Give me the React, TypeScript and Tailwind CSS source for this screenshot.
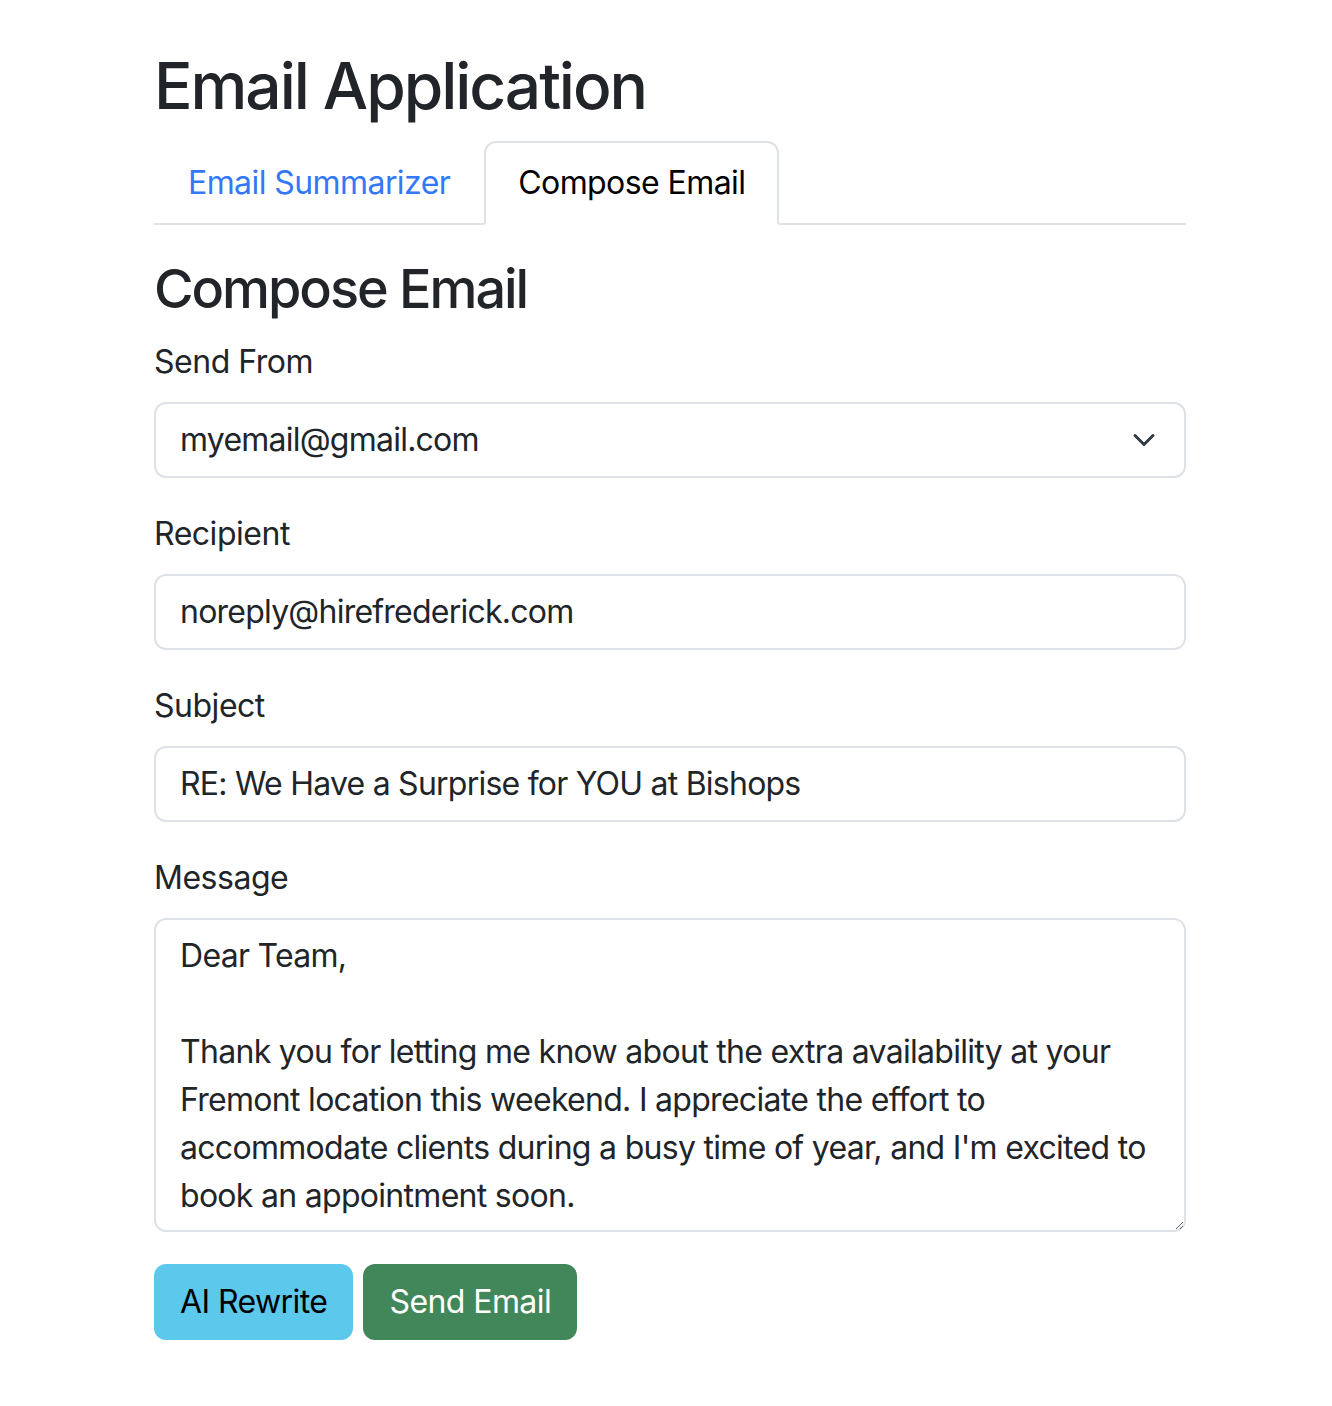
import { useState } from 'react';

const message = [
  'Dear Team,',
  '',
  'Thank you for letting me know about the extra availability at your',
  'Fremont location this weekend. I appreciate the effort to',
  "accommodate clients during a busy time of year, and I'm excited to",
  'book an appointment soon.'
].join('\n');

const fieldClass =
  'block h-[76px] w-full rounded-[12px] border-2 border-[#dee2e6] bg-white px-[24px] text-[32px] leading-[48px] tracking-[-0.024em] text-[#212529] outline-none';

const Field = ({ label, children }: { label: string; children: React.ReactNode }) => (
  <div className="mb-[32px]">
    <label className="mb-[16px] block text-[32px] leading-[48px] text-[#212529]">{label}</label>
    {children}
  </div>
);

const App = () => {
  const [tab, setTab] = useState('compose');
  const [from, setFrom] = useState('myemail@gmail.com');
  const [to, setTo] = useState('noreply@hirefrederick.com');
  const [subject, setSubject] = useState('RE: We Have a Surprise for YOU at Bishops');
  const [body, setBody] = useState(message);

  const tabs = [
    { id: 'summarize', label: 'Email Summarizer' },
    { id: 'compose', label: 'Compose Email' }
  ];

  return (
    <div className="min-h-[1406px] bg-white pl-[154px] pt-[48px] font-['Inter','Liberation_Sans',sans-serif] tracking-[-0.03em] text-[#212529]">
      <div className="w-[1032px]">
        <h1 className="mb-[16px] text-[64px] font-medium leading-[1.2] tracking-[-0.032em]">Email Application</h1>

        <ul className="flex border-b-2 border-[#dee2e6] tracking-[-0.036em]">
          {tabs.map((t) => (
            <li key={t.id} className="-mb-[2px]">
              <button
                onClick={() => setTab(t.id)}
                className={
                  tab === t.id
                    ? 'rounded-t-[12px] border-2 border-[#dee2e6] border-b-white bg-white px-[32px] py-[16px] text-[32px] leading-[48px] text-black'
                    : 'rounded-t-[12px] border-2 border-transparent px-[32px] py-[16px] text-[32px] leading-[48px] text-[#3478f6]'
                }
              >
                {t.label}
              </button>
            </li>
          ))}
        </ul>

        <div className="mt-[32px]">
          <h2 className="mb-[16px] text-[54px] font-medium leading-[1.2] tracking-[-0.038em]">Compose Email</h2>

          <Field label="Send From">
            <div className="relative">
              <select
                value={from}
                onChange={(e) => setFrom(e.target.value)}
                className={fieldClass + ' appearance-none pr-[72px]'}
              >
                <option>myemail@gmail.com</option>
                <option>work@gmail.com</option>
              </select>
              <svg
                className="pointer-events-none absolute right-[26px] top-1/2 -translate-y-1/2"
                width="32"
                height="24"
                viewBox="0 0 16 16"
                fill="none"
                stroke="#343a40"
                strokeWidth="2"
                strokeLinecap="round"
                strokeLinejoin="round"
              >
                <path d="m2 5 6 6 6-6" />
              </svg>
            </div>
          </Field>

          <Field label="Recipient">
            <input value={to} onChange={(e) => setTo(e.target.value)} className={fieldClass} />
          </Field>

          <Field label="Subject">
            <input value={subject} onChange={(e) => setSubject(e.target.value)} className={fieldClass} />
          </Field>

          <Field label="Message">
            <textarea
              rows={6}
              wrap="off"
              value={body}
              onChange={(e) => setBody(e.target.value)}
              className="block h-[314px] w-full resize-y overflow-hidden rounded-[12px] border-2 border-[#dee2e6] bg-white px-[24px] py-[12px] text-[32px] leading-[48px] tracking-[-0.022em] text-[#212529] outline-none"
            />
          </Field>

          <div className="flex gap-[10px] tracking-[-0.036em]">
            <button className="h-[76px] rounded-[12px] bg-[#5bc8ec] px-[26px] text-[32px] leading-[48px] text-black">
              AI Rewrite
            </button>
            <button className="h-[76px] rounded-[12px] bg-[#428759] px-[26px] text-[32px] leading-[48px] text-white">
              Send Email
            </button>
          </div>
        </div>
      </div>
    </div>
  );
};

export default App;
